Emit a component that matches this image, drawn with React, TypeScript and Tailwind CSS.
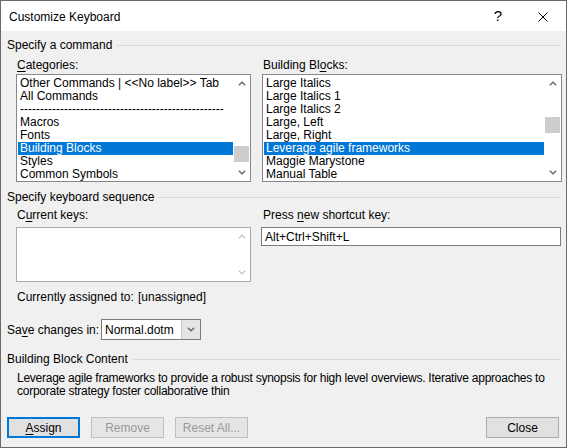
import React from "react";

const categories = [
  "Other Commands | <<No label>> Tab",
  "All Commands",
  "---------------------------------------------------",
  "Macros",
  "Fonts",
  "Building Blocks",
  "Styles",
  "Common Symbols",
];

const blocks = [
  "Large Italics",
  "Large Italics 1",
  "Large Italics 2",
  "Large, Left",
  "Large, Right",
  "Leverage agile frameworks",
  "Maggie Marystone",
  "Manual Table",
];

function Mn({ children }: { children: React.ReactNode }) {
  return <span className="underline decoration-1 underline-offset-[2px]">{children}</span>;
}

function Chevron({ up, disabled }: { up?: boolean; disabled?: boolean }) {
  return (
    <svg width="8" height="5" viewBox="0 0 8 5" className={up ? "" : "rotate-180"}>
      <path
        d="M0.8 4.3 L4 1.2 L7.2 4.3"
        fill="none"
        stroke={disabled ? "#c4c4c4" : "#606060"}
        strokeWidth="1.2"
      />
    </svg>
  );
}

function GroupHeader({ title, className }: { title: string; className: string }) {
  return (
    <div className={`flex h-[14px] items-center pl-[6px] pr-[5px] leading-[14px] ${className}`}>
      <span>{title}</span>
      <div className="ml-[5px] h-px flex-1 bg-[#dadada]" />
    </div>
  );
}

function ScrollBar({ thumb, disabled }: { thumb?: string; disabled?: boolean }) {
  return (
    <div className="flex w-[17px] flex-col">
      <div className="flex h-[17px] items-center justify-center">
        <Chevron up disabled={disabled} />
      </div>
      <div className="flex-1 px-px">{thumb && <div className={`h-[16px] bg-[#cdcdcd] ${thumb}`} />}</div>
      <div className="flex h-[17px] items-center justify-center">
        <Chevron disabled={disabled} />
      </div>
    </div>
  );
}

function ListBox({ items, selected, thumb }: { items: string[]; selected: number; thumb: string }) {
  return (
    <div className="flex h-[108px] border border-[#828790] bg-white">
      <div className="flex-1 overflow-hidden pl-px pt-[2px]">
        {items.map((item, i) => (
          <div
            key={item}
            className={
              i === selected
                ? "h-[13px] whitespace-nowrap bg-[#0078d7] pl-[2px] leading-[13px] text-white"
                : "h-[13px] whitespace-nowrap pl-[2px] leading-[13px]"
            }
          >
            {item}
          </div>
        ))}
      </div>
      <ScrollBar thumb={thumb} />
    </div>
  );
}

function Button({
  children,
  variant,
  className = "",
}: {
  children: React.ReactNode;
  variant: "default" | "normal" | "disabled";
  className?: string;
}) {
  const look =
    variant === "default"
      ? "border-2 border-[#0078d7] bg-[#e1e1e1] text-black"
      : variant === "normal"
        ? "border border-[#adadad] bg-[#e1e1e1] text-black"
        : "border border-[#bfbfbf] bg-[#e5e5e5] text-[#9a9a9a]";
  return (
    <div className={`flex h-[21px] w-[73px] items-center justify-center ${look} ${className}`}>
      {children}
    </div>
  );
}

export default function App() {
  return (
    <div className="flex h-[448px] w-[567px] flex-col overflow-hidden border border-[#6a6a6a] bg-[#f0f0f0] font-['Liberation_Sans',Arial,sans-serif] text-[12px] text-black">
      {/* title bar */}
      <div className="flex h-[30px] items-center bg-white">
        <span className="ml-[8px] pt-[2px]">Customize Keyboard</span>
        <div className="flex-1" />
        <span className="mr-[36px] text-[15px] font-light">?</span>
        <svg width="10" height="10" viewBox="0 0 10 10" className="mr-[18px] mt-px">
          <path d="M0.5 0.5 L9.5 9.5 M9.5 0.5 L0.5 9.5" stroke="#000" strokeWidth="1" />
        </svg>
      </div>

      <GroupHeader title="Specify a command" className="mt-[7px]" />
      <div className="mt-[6px] flex gap-[11px] pl-[15px]">
        <div className="flex w-[235px] flex-col">
          <div className="h-[14px] pl-px leading-[14px]">
            <Mn>C</Mn>ategories:
          </div>
          <div className="mt-[2px]">
            <ListBox items={categories} selected={5} thumb="mt-[54px]" />
          </div>
        </div>
        <div className="flex w-[300px] flex-col">
          <div className="h-[14px] pl-px leading-[14px]">
            Building Bl<Mn>o</Mn>cks:
          </div>
          <div className="mt-[2px]">
            <ListBox items={blocks} selected={5} thumb="mt-[25px]" />
          </div>
        </div>
      </div>

      <GroupHeader title="Specify keyboard sequence" className="mt-[8px]" />
      <div className="mt-[4px] flex gap-[10px] pl-[15px]">
        <div className="flex w-[235px] flex-col">
          <div className="h-[14px] pl-px leading-[14px]">
            C<Mn>u</Mn>rrent keys:
          </div>
          <div className="mt-[5px] flex h-[55px] border border-[#a9a9a9] bg-white">
            <div className="flex-1" />
            <ScrollBar disabled />
          </div>
        </div>
        <div className="flex w-[300px] flex-col">
          <div className="h-[14px] pl-[2px] leading-[14px]">
            Press <Mn>n</Mn>ew shortcut key:
          </div>
          <div className="mt-[5px] flex h-[19px] items-center border border-[#7a7a7a] bg-white pl-[3px]">
            Alt+Ctrl+Shift+L
          </div>
        </div>
      </div>

      <div className="mt-[8px] flex h-[14px] pl-[16px] leading-[14px]">
        <span className="w-[121px]">Currently assigned to:</span>
        <span>[unassigned]</span>
      </div>

      <div className="mt-[15px] flex h-[21px] items-center pl-[6px]">
        <span className="w-[94px]">
          Sa<Mn>v</Mn>e changes in:
        </span>
        <div className="flex h-[21px] w-[100px] border border-[#7a7a7a] bg-white">
          <div className="flex flex-1 items-center pl-[3px]">Normal.dotm</div>
          <div className="flex w-[19px] items-center justify-center border-l border-[#c4c4c4] bg-[#e5e5e5]">
            <Chevron />
          </div>
        </div>
      </div>

      <GroupHeader title="Building Block Content" className="mt-[12px]" />
      <div className="mt-[6px] pl-[16px] leading-[13px] tracking-[-0.25px]">
        <div className="whitespace-nowrap">
          Leverage agile frameworks to provide a robust synopsis for high level overviews. Iterative approaches to
        </div>
        <div className="whitespace-nowrap">corporate strategy foster collaborative thin</div>
      </div>

      <div className="mt-[19px] flex pl-[6px] pr-[7px]">
        <Button variant="default">
          <span>
            <Mn>A</Mn>ssign
          </span>
        </Button>
        <Button variant="disabled" className="ml-[11px]">
          Remove
        </Button>
        <Button variant="disabled" className="ml-[11px]">
          Reset All...
        </Button>
        <div className="flex-1" />
        <Button variant="normal">Close</Button>
      </div>
    </div>
  );
}
